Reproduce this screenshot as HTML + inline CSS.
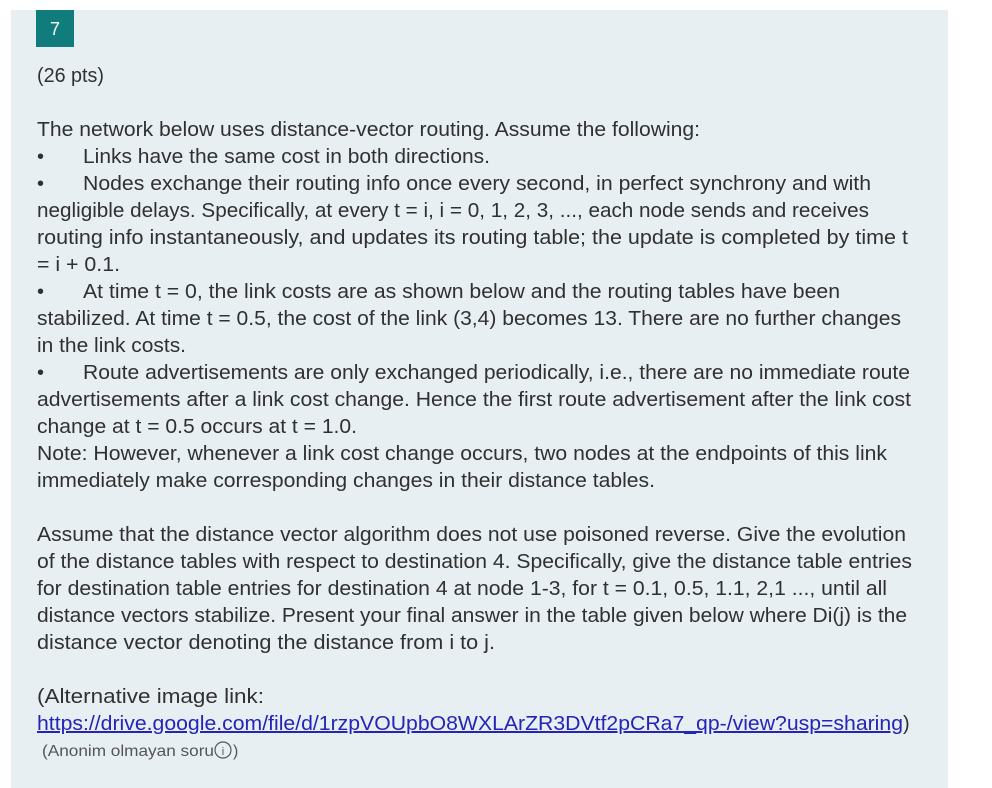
<!DOCTYPE html>
<html><head><meta charset="utf-8"><style>
html,body{margin:0;padding:0;background:#fff;width:992px;height:788px;overflow:hidden}
svg{display:block}
text{font-family:"Liberation Sans",sans-serif;font-size:20px;fill:#303030}
</style></head><body>
<svg width="992" height="788" xmlns="http://www.w3.org/2000/svg">
<rect x="11" y="10" width="937" height="778" fill="#e8eff3"/>
<rect x="36" y="10" width="38" height="37" fill="#107c7c"/>
<text x="55" y="35" text-anchor="middle" style="fill:#fff;font-size:18px">7</text>
<text x="37" y="82" textLength="67" lengthAdjust="spacingAndGlyphs">(26 pts)</text>
<text x="37" y="136" textLength="663" lengthAdjust="spacingAndGlyphs">The network below uses distance-vector routing. Assume the following:</text>
<text x="37" y="163">•</text>
<text x="83" y="163" textLength="407" lengthAdjust="spacingAndGlyphs">Links have the same cost in both directions.</text>
<text x="37" y="190">•</text>
<text x="83" y="190" textLength="788" lengthAdjust="spacingAndGlyphs">Nodes exchange their routing info once every second, in perfect synchrony and with</text>
<text x="37" y="217" textLength="832" lengthAdjust="spacingAndGlyphs">negligible delays. Specifically, at every t = i, i = 0, 1, 2, 3, ..., each node sends and receives</text>
<text x="37" y="244" textLength="871" lengthAdjust="spacingAndGlyphs">routing info instantaneously, and updates its routing table; the update is completed by time t</text>
<text x="37" y="271" textLength="83" lengthAdjust="spacingAndGlyphs">= i + 0.1.</text>
<text x="37" y="298">•</text>
<text x="83" y="298" textLength="757" lengthAdjust="spacingAndGlyphs">At time t = 0, the link costs are as shown below and the routing tables have been</text>
<text x="37" y="325" textLength="864" lengthAdjust="spacingAndGlyphs">stabilized. At time t = 0.5, the cost of the link (3,4) becomes 13. There are no further changes</text>
<text x="37" y="352" textLength="149" lengthAdjust="spacingAndGlyphs">in the link costs.</text>
<text x="37" y="379">•</text>
<text x="83" y="379" textLength="827" lengthAdjust="spacingAndGlyphs">Route advertisements are only exchanged periodically, i.e., there are no immediate route</text>
<text x="37" y="406" textLength="874" lengthAdjust="spacingAndGlyphs">advertisements after a link cost change. Hence the first route advertisement after the link cost</text>
<text x="37" y="433" textLength="320" lengthAdjust="spacingAndGlyphs">change at t = 0.5 occurs at t = 1.0.</text>
<text x="37" y="460" textLength="850" lengthAdjust="spacingAndGlyphs">Note: However, whenever a link cost change occurs, two nodes at the endpoints of this link</text>
<text x="37" y="487" textLength="618" lengthAdjust="spacingAndGlyphs">immediately make corresponding changes in their distance tables.</text>
<text x="37" y="541" textLength="869" lengthAdjust="spacingAndGlyphs">Assume that the distance vector algorithm does not use poisoned reverse. Give the evolution</text>
<text x="37" y="568" textLength="875" lengthAdjust="spacingAndGlyphs">of the distance tables with respect to destination 4. Specifically, give the distance table entries</text>
<text x="37" y="595" textLength="850" lengthAdjust="spacingAndGlyphs">for destination table entries for destination 4 at node 1-3, for t = 0.1, 0.5, 1.1, 2,1 ..., until all</text>
<text x="37" y="622" textLength="870" lengthAdjust="spacingAndGlyphs">distance vectors stabilize. Present your final answer in the table given below where Di(j) is the</text>
<text x="37" y="649" textLength="458" lengthAdjust="spacingAndGlyphs">distance vector denoting the distance from i to j.</text>
<text x="37" y="703" textLength="227" lengthAdjust="spacingAndGlyphs">(Alternative image link:</text>
<text x="37" y="730" textLength="866" lengthAdjust="spacingAndGlyphs" style="fill:#2424b8;text-decoration:underline">https://drive.google.com/file/d/1rzpVOUpbO8WXLArZR3DVtf2pCRa7_qp-/view?usp=sharing</text>
<text x="903" y="730">)</text>
<text x="42" y="756" textLength="172" lengthAdjust="spacingAndGlyphs" style="font-size:16px;fill:#555">(Anonim olmayan soru</text>
<circle cx="223" cy="750" r="8" fill="none" stroke="#555" stroke-width="1.2"/>
<text x="223" y="755" text-anchor="middle" style="font-size:11px;fill:#555">i</text>
<text x="233" y="756" style="font-size:16px;fill:#555">)</text>
</svg>
</body></html>
